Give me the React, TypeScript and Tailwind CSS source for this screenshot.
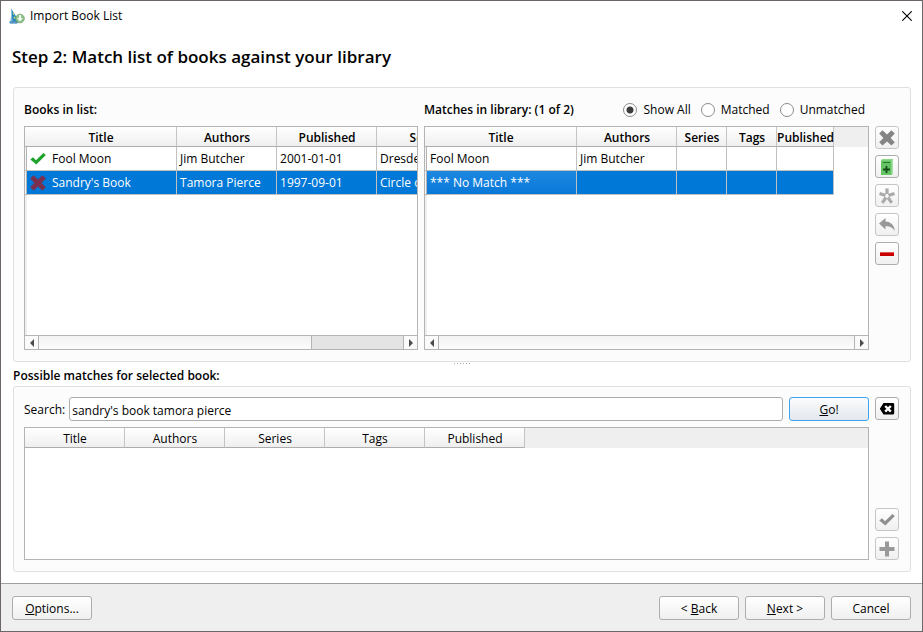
import type { ButtonHTMLAttributes, ReactNode } from "react";

type Column = { label: string; width: string };

const listColumns: Column[] = [
  { label: "Title", width: "w-[150px]" },
  { label: "Authors", width: "w-[100px]" },
  { label: "Published", width: "w-[100px]" },
  { label: "Series", width: "w-[100px]" },
];

const matchColumns: Column[] = [
  { label: "Title", width: "w-[150px]" },
  { label: "Authors", width: "w-[100px]" },
  { label: "Series", width: "w-[50px]" },
  { label: "Tags", width: "w-[50px]" },
  { label: "Published", width: "w-[57px]" },
];

const searchColumns = ["Title", "Authors", "Series", "Tags", "Published"];

function CheckIcon({ color }: { color: string }) {
  return (
    <svg viewBox="0 0 16 16" className="size-4 shrink-0" aria-hidden="true">
      <path d="M0.3 8.4 3 6.2 6 9.2 13.4 2 15.9 4 6.3 13.6Z" fill={color} />
    </svg>
  );
}

function CrossIcon({ color }: { color: string }) {
  return (
    <svg viewBox="0 0 16 16" className="size-4 shrink-0" aria-hidden="true">
      <path
        d="M3.6 0.3 8 4.4 12.4 0.3 15.8 3.6 11.6 7.9 15.8 12.3 12.4 15.6 8 11.5 3.6 15.6 0.2 12.3 4.4 7.9 0.2 3.6Z"
        fill={color}
      />
    </svg>
  );
}

function AppIcon() {
  return (
    <svg viewBox="0 0 16 16" className="size-4 shrink-0" aria-hidden="true">
      <path d="M2.2 0.5 10 13.2 8.5 15.3H1.2L0.2 14 3.2 12.5Z" fill="#2587c4" />
      <path d="M2.2 0.5 3.3 12.6 1 14.2 2 9Z" fill="#84bce0" />
      <path d="M3.7 3.6 5.4 6.2 4.2 7ZM4.3 9.2 6.4 8.5 5.8 11Z" fill="#e4df55" />
      <path d="M0.3 14.1Q4 11.7 9 14.3L8 15.6H1Z" fill="#5793bd" />
      <circle cx="11" cy="10.5" r="4.3" fill="#8fc58a" stroke="#6a9d67" strokeWidth="0.8" />
      <path d="M10 7h2v3h2l-3 3.4L8 10h2Z" fill="#eff9ed" />
    </svg>
  );
}

function IconButton({ children, ...rest }: { children: ReactNode } & ButtonHTMLAttributes<HTMLButtonElement>) {
  return (
    <button
      type="button"
      className="flex h-[23px] w-6 shrink-0 items-center justify-center rounded-[3px] border border-[#adadad] bg-linear-to-b from-white to-[#f0f0f0] disabled:border-[#c6c6c6]"
      {...rest}
    >
      {children}
    </button>
  );
}

function PushButton({ children, primary = false }: { children: ReactNode; primary?: boolean }) {
  return (
    <button
      type="button"
      className={
        primary
          ? "h-6 w-20 shrink-0 rounded-[3px] border border-[#3fa4f0] bg-linear-to-b from-[#fbfcfd] to-[#e3e8ee] pt-0.5"
          : "h-6 w-20 shrink-0 rounded-[3px] border border-[#adadad] bg-linear-to-b from-white to-[#f0f0f0] pt-0.5"
      }
    >
      {children}
    </button>
  );
}

function GroupBox({ children }: { children: ReactNode }) {
  return (
    <div className="mr-[11px] ml-3 flex gap-1.5 rounded-[3px] border border-[#e0e0e0] bg-[#fcfcfc] px-2.5 pt-2.5 pr-[11px] pb-[11px]">
      {children}
    </div>
  );
}

function ColumnHeader({ children, span = 1, bold = true }: { children: ReactNode; span?: number; bold?: boolean }) {
  return (
    <th
      colSpan={span}
      className={
        bold
          ? "h-5 border-r border-b border-[#c4c4c4] border-b-[#adadad] bg-linear-to-b from-white to-[#efefef] p-0 text-center font-semibold whitespace-nowrap"
          : "h-5 border-r border-b border-[#c4c4c4] border-b-[#adadad] bg-linear-to-b from-white to-[#efefef] p-0 text-center font-normal whitespace-nowrap"
      }
    >
      <span className="flex h-[19px] items-center justify-center pt-0.5 pl-px">{children}</span>
    </th>
  );
}

function Cell({ children, focused = false }: { children?: ReactNode; focused?: boolean }) {
  return (
    <td
      className={
        focused
          ? "h-6 border-r border-b border-[#c0c0c0] bg-linear-to-b from-[#1c88e0] to-[#0878d8] p-0 px-[3px] whitespace-nowrap"
          : "h-6 border-r border-b border-[#c0c0c0] p-0 px-[3px] whitespace-nowrap"
      }
    >
      <span className="flex h-[23px] items-center gap-1.5">{children}</span>
    </td>
  );
}

function BookTable({ label, columns, children }: { label: string; columns: Column[]; children: ReactNode }) {
  return (
    <table aria-label={label} className="w-full table-fixed border-separate border-spacing-0">
      <colgroup>
        <col className="w-0.5" />
        {columns.map((c) => (
          <col key={c.label} className={c.width} />
        ))}
        <col />
      </colgroup>
      <thead>
        <tr>
          {columns.map((c, i) => (
            <ColumnHeader key={c.label} span={i === 0 ? 2 : 1}>
              {c.label}
            </ColumnHeader>
          ))}
          <td className="bg-[#efefef] p-0" />
        </tr>
      </thead>
      <tbody>{children}</tbody>
    </table>
  );
}

function Row({ selected = false, children }: { selected?: boolean; children: ReactNode }) {
  return (
    <tr className={selected ? "text-white *:not-first:not-last:bg-[#0078d7]" : ""}>
      <td className="border-r border-b border-[#b4b4b4] bg-[#f4f4f4] p-0" />
      {children}
      <td className="p-0" />
    </tr>
  );
}

function ScrollBar({ thumb }: { thumb: ReactNode }) {
  return (
    <div className="flex h-3.5 shrink-0 border-t border-[#b4b4b4] bg-[#e4e4e4]">
      <button type="button" aria-label="Scroll left" className="flex w-3.5 items-center justify-center border-r border-[#b4b4b4] bg-[#fafafa]">
        <svg viewBox="0 0 4 8" className="h-2 w-1" aria-hidden="true">
          <path d="M4 0v8L0 4Z" fill="#4c4c4c" />
        </svg>
      </button>
      {thumb}
      <button type="button" aria-label="Scroll right" className="flex w-3.5 items-center justify-center border-l border-[#b4b4b4] bg-[#fafafa]">
        <svg viewBox="0 0 4 8" className="h-2 w-1" aria-hidden="true">
          <path d="M0 0v8l4-4Z" fill="#4c4c4c" />
        </svg>
      </button>
    </div>
  );
}

function TableFrame({ children }: { children: ReactNode }) {
  return (
    <div className="flex h-56 flex-col border border-[#b4b4b4] bg-[linear-gradient(to_right,#efefef_2px,#fff_2px)]">
      {children}
    </div>
  );
}

function Radio({ label, checked = false }: { label: string; checked?: boolean }) {
  return (
    <label className="flex items-center gap-1.5">
      <input
        type="radio"
        name="filter"
        defaultChecked={checked}
        className="size-3.5 appearance-none rounded-full border border-[#8c8c8c] bg-white checked:bg-[radial-gradient(circle,#3c3c3c_3px,#fff_4px)]"
      />
      {label}
    </label>
  );
}

export default function App() {
  return (
    <main className="flex min-h-screen flex-col border border-[#6c6668] bg-white font-['Open_Sans','Noto_Sans',sans-serif] text-[12px] leading-4 text-black">
      <header className="flex h-[30px] items-center gap-[5px] pr-2.5 pl-2">
        <AppIcon />
        <span className="grow">Import Book List</span>
        <button type="button" aria-label="Close">
          <svg viewBox="0 0 10 10" className="size-2.5" aria-hidden="true">
            <path d="M0.3 0.3 9.7 9.7M9.7 0.3 0.3 9.7" stroke="#000" strokeWidth="1.1" />
          </svg>
        </button>
      </header>
      <h1 className="px-[11px] pt-3.5 pb-[18px] text-[17px] leading-6 font-semibold">
        Step 2: Match list of books against your library
      </h1>

      <GroupBox>
        <div className="grid grow grid-cols-[394fr_445fr] gap-1.5">
          <section className="min-w-0">
            <h2 className="flex h-7 items-start pt-1 font-semibold">Books in list:</h2>
            <TableFrame>
              <div className="grow overflow-hidden">
                <BookTable label="Books in list" columns={listColumns}>
                  <Row>
                    <Cell>
                      <CheckIcon color="#1ea32c" />
                      Fool Moon
                    </Cell>
                    <Cell>Jim Butcher</Cell>
                    <Cell>2001-01-01</Cell>
                    <Cell>Dresden Files</Cell>
                  </Row>
                  <Row selected>
                    <Cell>
                      <CrossIcon color="#7b3050" />
                      Sandry's Book
                    </Cell>
                    <Cell>Tamora Pierce</Cell>
                    <Cell>1997-09-01</Cell>
                    <Cell>Circle of Magic</Cell>
                  </Row>
                </BookTable>
              </div>
              <ScrollBar
                thumb={
                  <div className="flex grow">
                    <div className="w-3/4 border-r border-[#b4b4b4] bg-linear-to-b from-[#f2f2f2] to-[#fcfcfc]" />
                  </div>
                }
              />
            </TableFrame>
          </section>

          <section className="min-w-0">
            <div className="flex h-7 items-start pt-1">
              <h2 className="grow font-semibold">Matches in library: (1 of 2)</h2>
              <div className="flex gap-2.5 pr-1">
                <Radio label="Show All" checked />
                <Radio label="Matched" />
                <Radio label="Unmatched" />
              </div>
            </div>
            <TableFrame>
              <div className="grow overflow-hidden">
                <BookTable label="Matches in library" columns={matchColumns}>
                  <Row>
                    <Cell>Fool Moon</Cell>
                    <Cell>Jim Butcher</Cell>
                    <Cell />
                    <Cell />
                    <Cell />
                  </Row>
                  <Row selected>
                    <Cell focused>*** No Match ***</Cell>
                    <Cell />
                    <Cell />
                    <Cell />
                    <Cell />
                  </Row>
                </BookTable>
              </div>
              <ScrollBar thumb={<div className="grow bg-linear-to-b from-[#f2f2f2] to-[#fcfcfc]" />} />
            </TableFrame>
          </section>
        </div>

        <div className="flex flex-col gap-1.5 pt-7">
          <IconButton aria-label="Remove match" disabled>
            <CrossIcon color="#858585" />
          </IconButton>
          <IconButton aria-label="Add empty book">
            <svg viewBox="0 0 16 16" className="size-4" aria-hidden="true">
              <path d="M2 1.5 3.5 0H14v14.5L12.5 16H2Z" fill="#64c465" />
              <path d="M12.4 1.5 14 0v14.5L12.4 16Z" fill="#a3e2a1" />
              <path d="M2 1.5 3.5 0H14l-1.6 1.5Z" fill="#8cd889" />
              <path d="M4 3.5h7" stroke="#277a2b" />
              <path d="M7.5 7v7M4 10.5h7" stroke="#124d16" strokeWidth="1.8" />
            </svg>
          </IconButton>
          <IconButton aria-label="Choose match" disabled>
            <svg viewBox="0 0 16 16" className="size-4" aria-hidden="true">
              <path
                d="M8 6V0.5M9.500 7.500 15.500 5.500M9 9.500 12.700 14.800M7 9.500 3.300 14.800M6.500 7.500 0.500 5.500"
                stroke="#aaa"
                strokeWidth="3.200"
              />
            </svg>
          </IconButton>
          <IconButton aria-label="Revert" disabled>
            <svg viewBox="0 0 16 16" className="size-4" aria-hidden="true">
              <path d="M0 6.5 6.5 1v3.400c5.500.300 9 4 9.300 9.600C13.500 10.500 11 9.200 6.500 9.200v3.300Z" fill="#999" />
            </svg>
          </IconButton>
          <IconButton aria-label="Remove book">
            <svg viewBox="0 0 16 16" className="size-4" aria-hidden="true">
              <path d="M1 6h14v4H1Z" fill="#c80000" />
              <path d="M1 6h14v1H1Z" fill="#e05555" />
            </svg>
          </IconButton>
        </div>
      </GroupBox>

      <div className="flex h-1.5 items-start justify-center gap-0.5 pt-px" aria-hidden="true">
        {[0, 1, 2, 3, 4, 5].map((dot) => (
          <i key={dot} className="size-px bg-[#aaa]" />
        ))}
      </div>
      <h2 className="px-3 pb-0.5 font-semibold">Possible matches for selected book:</h2>

      <GroupBox>
        <div className="flex min-w-0 grow flex-col gap-1.5">
          <div className="flex items-center gap-1">
            <label htmlFor="search" className="pt-0.5">
              Search:
            </label>
            <input
              id="search"
              type="text"
              defaultValue="sandry's book tamora pierce"
              className="mr-0.5 h-6 min-w-0 grow rounded-[3px] border border-[#adadad] bg-white px-0.5 pt-0.5"
            />
            <PushButton primary>
              <u>G</u>o!
            </PushButton>
          </div>
          <div className="h-[133px] border border-[#b4b4b4] bg-white">
            <table aria-label="Possible matches" className="w-full table-fixed border-separate border-spacing-0">
              <colgroup>
                {searchColumns.map((c) => (
                  <col key={c} className="w-[100px]" />
                ))}
                <col />
              </colgroup>
              <thead>
                <tr>
                  {searchColumns.map((c) => (
                    <ColumnHeader key={c} bold={false}>
                      {c}
                    </ColumnHeader>
                  ))}
                  <td className="bg-[#efefef] p-0" />
                </tr>
              </thead>
            </table>
          </div>
        </div>
        <div className="flex flex-col gap-1.5">
          <IconButton aria-label="Clear search">
            <svg viewBox="0 0 16 16" className="size-4" aria-hidden="true">
              <path d="M4.500 2H14a1.200 1.200 0 0 1 1.200 1.200v9.100a1.200 1.200 0 0 1-1.200 1.200H4.500L0.800 7.800Z" fill="#000" />
              <path d="m6.200 5 5.600 5.600m0-5.600-5.600 5.600" stroke="#fff" strokeWidth="2.400" />
            </svg>
          </IconButton>
          <div className="grow" />
          <IconButton aria-label="Select match" disabled>
            <CheckIcon color="#8f8f8f" />
          </IconButton>
          <IconButton aria-label="Append match" disabled>
            <svg viewBox="0 0 16 16" className="size-4" aria-hidden="true">
              <path d="M8 0.500v15M0.500 8h15" stroke="#999" strokeWidth="4" />
            </svg>
          </IconButton>
        </div>
      </GroupBox>

      <footer className="mt-[11px] flex grow items-start gap-1.5 border-t border-[#a0a0a0] bg-[#efefef] px-[11px] pt-3 pb-2.5">
        <PushButton>
          <u>O</u>ptions...
        </PushButton>
        <div className="grow" />
        <PushButton>
          &lt; <u>B</u>ack
        </PushButton>
        <PushButton>
          <u>N</u>ext &gt;
        </PushButton>
        <PushButton>Cancel</PushButton>
      </footer>
    </main>
  );
}
